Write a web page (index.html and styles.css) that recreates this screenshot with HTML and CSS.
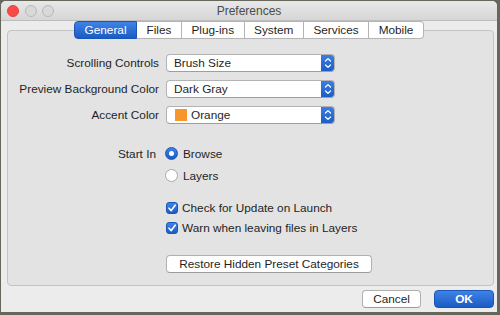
FILE: index.html
```html
<!DOCTYPE html>
<html>
<head>
<meta charset="utf-8">
<link rel="stylesheet" href="styles.css">
</head>
<body>
<div class="window">
  <div class="titlebar">
    <div class="lights">
      <span class="light red"></span>
      <span class="light"></span>
      <span class="light"></span>
    </div>
    <div class="title">Preferences</div>
    <div></div>
  </div>
  <div class="tabs">
    <span class="tab selected">General</span>
    <span class="tab">Files</span>
    <span class="tab">Plug-ins</span>
    <span class="tab">System</span>
    <span class="tab">Services</span>
    <span class="tab">Mobile</span>
  </div>
  <div class="box">
    <div class="row select-row first">
      <span class="label">Scrolling Controls</span>
      <div class="select">
        <span class="value">Brush Size</span>
        <span class="stepper"><svg width="14" height="18" viewBox="0 0 14 18"><path d="M4.5 7 L7 4.6 L9.5 7 M4.5 11 L7 13.4 L9.5 11" fill="none" stroke="#fff" stroke-width="1.3" stroke-linecap="round" stroke-linejoin="round"/></svg></span>
      </div>
    </div>
    <div class="row select-row">
      <span class="label">Preview Background Color</span>
      <div class="select">
        <span class="value">Dark Gray</span>
        <span class="stepper"><svg width="14" height="18" viewBox="0 0 14 18"><path d="M4.5 7 L7 4.6 L9.5 7 M4.5 11 L7 13.4 L9.5 11" fill="none" stroke="#fff" stroke-width="1.3" stroke-linecap="round" stroke-linejoin="round"/></svg></span>
      </div>
    </div>
    <div class="row select-row">
      <span class="label">Accent Color</span>
      <div class="select">
        <span class="value"><span class="swatch"></span>Orange</span>
        <span class="stepper"><svg width="14" height="18" viewBox="0 0 14 18"><path d="M4.5 7 L7 4.6 L9.5 7 M4.5 11 L7 13.4 L9.5 11" fill="none" stroke="#fff" stroke-width="1.3" stroke-linecap="round" stroke-linejoin="round"/></svg></span>
      </div>
    </div>
    <div class="row radio-row start">
      <span class="label short">Start In</span>
      <span class="radio on"></span>
      <span class="opt">Browse</span>
    </div>
    <div class="row radio-row second">
      <span class="label"></span>
      <span class="radio"></span>
      <span class="opt">Layers</span>
    </div>
    <div class="row check-row first-check">
      <span class="label"></span>
      <span class="check"><svg width="12" height="12" viewBox="0 0 12 12"><path d="M3 6.2 L5.2 8.6 L9.2 3.2" fill="none" stroke="#fff" stroke-width="1.6" stroke-linecap="round" stroke-linejoin="round"/></svg></span>
      <span class="opt">Check for Update on Launch</span>
    </div>
    <div class="row check-row">
      <span class="label"></span>
      <span class="check"><svg width="12" height="12" viewBox="0 0 12 12"><path d="M3 6.2 L5.2 8.6 L9.2 3.2" fill="none" stroke="#fff" stroke-width="1.6" stroke-linecap="round" stroke-linejoin="round"/></svg></span>
      <span class="opt">Warn when leaving files in Layers</span>
    </div>
    <div class="row button-row">
      <span class="label"></span>
      <span class="button restore">Restore Hidden Preset Categories</span>
    </div>
  </div>
  <div class="footer">
    <span class="button cancel">Cancel</span>
    <span class="button ok">OK</span>
  </div>
</div>
</body>
</html>
```
FILE: styles.css
```css
* { box-sizing: border-box; }

body {
  margin: 0;
  width: 500px;
  height: 315px;
  overflow: hidden;
  background: #66665a;
  font-family: "Liberation Sans", Arial, sans-serif;
  font-size: 11.8px;
  color: #1f1f1f;
}

.window {
  margin: 1px 3px 0 1px;
  width: 496px;
  height: 311px;
  background: #ececec;
  border-radius: 5px 5px 0 0;
  overflow: hidden;
  display: flex;
  flex-direction: column;
}

.titlebar {
  height: 20px;
  flex: none;
  background: linear-gradient(#e8e8e8, #d6d6d6);
  border-bottom: 1px solid #bdbdbd;
  display: grid;
  grid-template-columns: 1fr auto 1fr;
  align-items: center;
}

.lights {
  display: flex;
  gap: 5.5px;
  padding-left: 6px;
}

.light {
  width: 12px;
  height: 12px;
  border-radius: 50%;
  background: #d9d9d9;
  border: 1px solid #b8b8b8;
}

.light.red {
  background: #fc4b47;
  border-color: #e0443e;
}

.title {
  color: #4b4b4b;
  font-size: 12px;
  line-height: 20px;
}

.tabs {
  display: flex;
  justify-content: center;
  height: 18px;
  margin-bottom: -9px;
  position: relative;
  z-index: 1;
}

.tab {
  height: 18px;
  line-height: 16px;
  padding: 0 9.5px;
  background: #fff;
  border: 1px solid #b4b4b4;
  border-left: none;
  color: #1f1f1f;
}

.tab:first-child {
  border-left: 1px solid #b4b4b4;
  border-radius: 4px 0 0 4px;
}

.tab:last-child {
  border-radius: 0 4px 4px 0;
}

.tab.selected {
  background: linear-gradient(#3f82e8, #1b5cc3);
  border-color: #1a56b5;
  color: #fff;
}

.box {
  margin: 0 3px 0 6px;
  height: 256px;
  flex: none;
  border: 1px solid #c4c4c4;
  border-radius: 4px;
  background: #e3e3e3;
  display: flex;
  flex-direction: column;
}

.row {
  display: flex;
  align-items: center;
  flex: none;
}

.label {
  width: 151px;
  margin-right: 7px;
  text-align: right;
  flex: none;
}

.label.short {
  padding-right: 3px;
}

.select-row { height: 18px; margin-top: 8px; }
.select-row.first { margin-top: 23px; }

.select {
  width: 169px;
  height: 18px;
  display: flex;
  background: #fff;
  border: 1px solid #b3b3b3;
  border-bottom-color: #9e9e9e;
  border-radius: 4px;
  overflow: hidden;
}

.value {
  flex: 1;
  display: flex;
  align-items: center;
  padding-left: 7px;
  line-height: 16px;
}

.swatch {
  width: 12px;
  height: 12px;
  background: #f7962c;
  margin: 0 4px 0 1px;
}

.stepper {
  width: 14px;
  height: 18px;
  margin: -1px -1px -1px 0;
  background: linear-gradient(#3c7fe6, #1b5cc3);
  border-radius: 0 4px 4px 0;
  display: flex;
}

.radio-row { height: 13px; margin-top: 9px; }
.radio-row.start { margin-top: 23px; }

.radio {
  width: 13px;
  height: 13px;
  border-radius: 50%;
  background: #fff;
  border: 1px solid #a8a8a8;
  flex: none;
  margin-left: -1px;
  display: flex;
  align-items: center;
  justify-content: center;
}

.radio.on {
  background: linear-gradient(#3f82e8, #1b5cc3);
  border-color: #1a56b5;
}

.radio.on::after {
  content: "";
  width: 5px;
  height: 5px;
  border-radius: 50%;
  background: #fff;
}

.opt {
  margin-left: 5px;
  line-height: 14px;
}

.check-row { height: 12px; margin-top: 8px; }
.check-row.first-check { margin-top: 20px; }

.check {
  width: 12px;
  height: 12px;
  border-radius: 3px;
  background: linear-gradient(#3f82e8, #1b5cc3);
  border: 1px solid #1a56b5;
  flex: none;
  display: flex;
  align-items: center;
  justify-content: center;
}

.check svg { margin: -1px; }

.check-row .opt { margin-left: 4px; }

.button-row { height: 18px; margin-top: 21px; }

.button {
  height: 18px;
  line-height: 16px;
  text-align: center;
  background: #fff;
  border: 1px solid #b0b0b0;
  border-bottom-color: #9c9c9c;
  border-radius: 4px;
}

.restore { width: 206px; }

.footer {
  display: flex;
  justify-content: flex-end;
  gap: 13px;
  margin-top: 4px;
  padding-right: 3px;
}

.cancel { width: 59px; }

.ok {
  width: 60px;
  background: linear-gradient(#3f82e8, #1b5cc3);
  border-color: #1a56b5;
  color: #fff;
  font-weight: bold;
}
```
